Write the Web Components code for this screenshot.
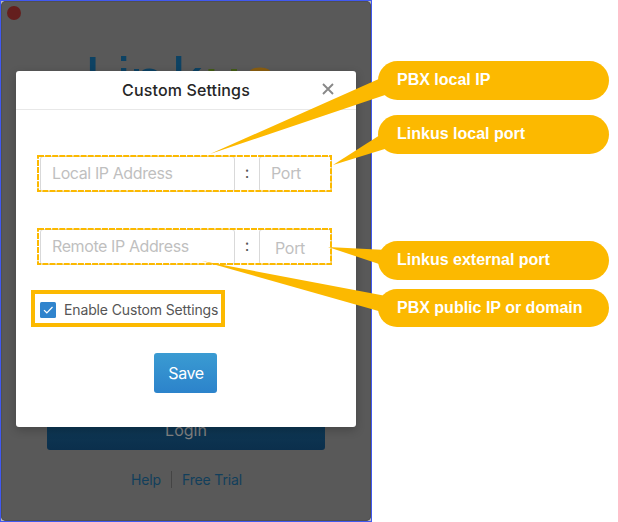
<!DOCTYPE html>
<html lang="en">
<head>
<meta charset="utf-8">
<title>Custom Settings</title>
<style>
  html, body { margin: 0; width: 618px; height: 522px; overflow: hidden; background: #fff; }
  body { font-family: Inter, "Liberation Sans", sans-serif; }
</style>
</head>
<body>
<guide-canvas></guide-canvas>
<script>
function define(name, markup) {
  customElements.define(name, class extends HTMLElement {
    constructor() {
      super();
      this.attachShadow({ mode: "open" }).innerHTML = markup;
    }
  });
}

define("brand-logo", `
<style>
  :host { display: flex; height: 67px; padding-left: 84px; margin-top: 25px; font: 400 60px/67px "Liberation Sans", sans-serif; color: #0d4263; white-space: nowrap; }
  span { display: block; flex: none; }
  .l { width: 32px; line-height: 65px; } .i { width: 13px; } .n { width: 42px; line-height: 69px; } .k { width: 32px; }
  .u { width: 41px; line-height: 69px; color: #435c16; transform: scaleX(1.13); transform-origin: left; }
  .s { color: #8a5e10; }
</style><span class="l">L</span><span class="i">i</span><span class="n">n</span><span class="k">k</span><span class="u">u</span><span class="s">s</span>`);

define("login-window", `
<style>
  :host { display: flex; flex-direction: column; box-sizing: border-box; width: 372px; height: 522px; border: 1px solid #4159f0; background: #bbb; }
  .sheet { flex: 1; display: flex; flex-direction: column; background: #595959; border-radius: 5px; box-shadow: inset 0 0 0 1px #505050; }
  .close { width: 14px; height: 14px; border-radius: 50%; background: #641f1e; margin: 5px 0 0 5.5px; flex: none; }
  .login { margin: auto 46px 0; height: 40px; border-radius: 3px; background: linear-gradient(#103d59, #0b2f4c); color: #808080; font-size: 16px; line-height: 41px; text-align: center; flex: none; }
  .links { display: flex; align-items: center; justify-content: center; gap: 10px; height: 18px; margin: 20px 0 33px; padding-left: 1px; font-size: 14px; letter-spacing: -.15px; color: #113f5c; flex: none; }
  .links i { width: 1px; height: 17px; background: #444; }
  .links span { white-space: nowrap; }
</style>
<div class="sheet"><div class="close"></div><brand-logo></brand-logo>
<div class="login">Login</div>
<div class="links"><span>Help</span><i></i><span>Free Trial</span></div></div>`);

define("address-row", `
<style>
  :host { display: flex; box-sizing: border-box; width: 292px; height: 36px; color: #bfbfbf; font-size: 16px; line-height: 33px; }
  .ip, .port { box-sizing: border-box; border: 1px solid #d9d9d9; border-radius: 3px; height: 36px; white-space: nowrap; }
  .ip { width: 195px; padding-left: 11px; letter-spacing: -.4px; }
  .colon { width: 24px; text-align: center; color: #555; }
  .port { width: 73px; padding-left: var(--port-indent, 11px); padding-top: var(--port-drop, 0px); letter-spacing: -.3px; }
</style><div class="ip"><slot></slot></div><div class="colon">:</div><div class="port">Port</div>`);

define("check-option", `
<style>
  :host { display: flex; align-items: center; gap: 8px; font-size: 14px; line-height: 20px; letter-spacing: -.13px; color: #555; white-space: nowrap; }
  svg { display: block; flex: none; }
</style>
<svg width="16" height="16" viewBox="0 0 16 16"><rect width="16" height="16" rx="1.5" fill="#3084cd"/><path d="M4 8.1 6.8 10.8 12.5 5" fill="none" stroke="#fff" stroke-width="1.2"/></svg><span><slot></slot></span>`);

define("settings-dialog", `
<style>
  :host { display: flex; flex-direction: column; width: 340px; height: 356px; background: #fff; border-radius: 3px; box-shadow: 0 3px 10px rgba(0,0,0,.22); }
  header { position: relative; height: 38px; border-bottom: 1px solid #e8e8e8; font-size: 16px; font-weight: 500; line-height: 39px; text-align: center; color: #262626; letter-spacing: .14px; flex: none; }
  header svg { position: absolute; left: 306px; top: 12px; }
  .body { display: flex; flex-direction: column; padding: 46px 0 0 24px; }
  .second { margin-top: 37px; --port-indent: 15px; --port-drop: 2px; }
  check-option { margin-top: 35px; }
  button { font: 400 16px/40px Inter, sans-serif; letter-spacing: -.4px; width: 63px; height: 40px; margin: 33px 0 0 114px; padding: 0 0 0 1px; border: 0; border-radius: 3px; color: #fff; background: linear-gradient(#3a9bd2, #2c83cb); }
</style>
<header>Custom Settings<svg width="12" height="12" viewBox="0 0 12 12"><path d="M1 1 11 11M11 1 1 11" stroke="#888" stroke-width="1.9"/></svg></header>
<div class="body"><address-row>Local IP Address</address-row><address-row class="second">Remote IP Address</address-row>
<check-option>Enable Custom Settings</check-option><button>Save</button></div>`);

define("callout-label", `
<style>
  :host { display: block; box-sizing: border-box; width: 231px; height: 39px; border-radius: 20px; background: #fcb900; color: #fff; padding-left: 19px; font: bold 16px/37px "Liberation Sans", Arial, sans-serif; white-space: nowrap; }
</style><slot></slot>`);

define("guide-canvas", `
<style>
  :host { display: block; position: relative; width: 618px; height: 522px; overflow: hidden; }
  settings-dialog, callout-label, .marks { position: absolute; }
  settings-dialog { left: 16px; top: 71px; }
  .marks { left: 0; top: 0; }
  callout-label { left: 378px; }
</style>
<login-window></login-window><settings-dialog></settings-dialog>
<svg class="marks" width="618" height="522" viewBox="0 0 618 522">
  <g fill="none" stroke="#fcb900" stroke-width="2"><g stroke-dasharray="6 1.1"><rect x="38" y="156" width="293" height="35"/><rect x="38" y="229" width="293" height="35"/></g><rect x="33" y="292" width="190" height="33" stroke-width="4"/></g>
  <g fill="#fcb900"><path d="M210 154 381 78V88L388 94Z"/><path d="M333 165 380 135 388 148Z"/><path d="M328 247 386 250 382 265Z"/><path d="M202 261 386 296 382 312Z"/></g>
</svg>
<callout-label style="top:61px">PBX local IP</callout-label>
<callout-label style="top:115px">Linkus local port</callout-label>
<callout-label style="top:241px">Linkus external port</callout-label>
<callout-label style="top:289px;height:38px">PBX public IP or domain</callout-label>`);
</script>
</body>
</html>
